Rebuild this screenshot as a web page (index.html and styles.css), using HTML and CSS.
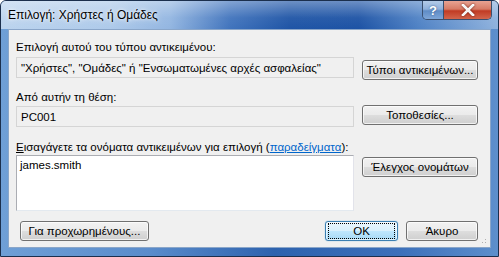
FILE: index.html
```html
<!DOCTYPE html>
<html>
<head>
<meta charset="utf-8">
<link rel="stylesheet" href="styles.css">
</head>
<body>
<div class="window">
  <div class="titlebar">
    <div class="title">Επιλογή: Χρήστες ή Ομάδες</div>
    <div class="caption-btns">
      <div class="cap help">?</div>
      <div class="cap close">
        <svg width="14" height="12" viewBox="0 0 14 12"><path d="M2 1 L12 11 M12 1 L2 11" stroke="#fff" stroke-width="2.6" stroke-linecap="square" fill="none"/><path d="M2 1 L12 11 M12 1 L2 11" stroke="#f4f4f4" stroke-width="1.6" fill="none"/></svg>
      </div>
    </div>
  </div>
  <div class="body-row">
    <div class="client">
      <div class="label l1">Επιλογή αυτού του τύπου αντικειμένου:</div>
      <div class="row r1">
        <div class="field">"Χρήστες", "Ομάδες" ή "Ενσωματωμένες αρχές ασφαλείας"</div>
        <div class="btn b1">Τύποι αντικειμένων...</div>
      </div>
      <div class="label l2">Από αυτήν τη θέση:</div>
      <div class="row r2">
        <div class="field">PC001</div>
        <div class="btn b2">Τοποθεσίες...</div>
      </div>
      <div class="label l3"><u>Ε</u>ισαγάγετε τα ονόματα αντικειμένων για επιλογή (<span class="link">παραδείγματα</span>):</div>
      <div class="row r3">
        <div class="textarea">james.smith</div>
        <div class="btn b3">Έλεγχος ονομάτων</div>
      </div>
      <div class="row bottom">
        <div class="btn adv">Για προχωρημένους...</div>
        <div class="spacer"></div>
        <div class="btn ok"><span class="focus">OK</span></div>
        <div class="btn cancel">Άκυρο</div>
      </div>
      <div class="grip"></div>
    </div>
  </div>
</div>
</body>
</html>
```
FILE: styles.css
```css
html, body { margin: 0; padding: 0; }
body {
  width: 499px;
  height: 257px;
  overflow: hidden;
  background: #fff;
  font-family: "Liberation Sans", Arial, sans-serif;
  font-size: 11.5px;
  color: #000;
}
.window {
  width: 499px;
  height: 257px;
  box-sizing: border-box;
  border: 1px solid #1b2f4d;
  border-radius: 6px 6px 0 0;
  background: linear-gradient(90deg, #6f9fd6 0%, #5a8ccb 30%, #2d62ae 55%, #3c70ba 80%, #5d8fcc 100%);
  display: flex;
  flex-direction: column;
  overflow: hidden;
}
.titlebar {
  height: 28px;
  display: flex;
  align-items: flex-start;
  background:
    linear-gradient(180deg, rgba(255,255,255,0.35) 0%, rgba(255,255,255,0.05) 60%, rgba(0,0,0,0) 100%),
    linear-gradient(90deg, #bcd4ee 0%, #aecaea 22%, #93b6e1 34%, #4174bd 46%, #1f55a6 58%, #1d53a5 72%, #4f82c5 84%, #8fb2dd 100%);
}
.title {
  padding: 7px 0 0 7px;
  font-family: "Liberation Sans", Arial, sans-serif;
  font-size: 12px;
  color: #000;
  text-shadow: 0 0 6px rgba(255,255,255,0.9), 0 0 3px rgba(255,255,255,0.9);
  flex: 1;
}
.caption-btns {
  display: flex;
  margin-right: 6px;
  border: 1px solid #3a4f6e;
  border-top: none;
  border-radius: 0 0 5px 5px;
  overflow: hidden;
}
.cap {
  height: 18px;
  display: flex;
  align-items: center;
  justify-content: center;
}
.help {
  width: 20px;
  border-right: 1px solid #3a4f6e;
  background: linear-gradient(180deg, #b3cbe8 0%, #8fb0db 45%, #5f8cc6 55%, #7ea6d8 100%);
  color: #fff;
  font-weight: bold;
  font-size: 13px;
  text-shadow: 0 0 2px #2a4f80;
}
.close {
  width: 47px;
  background: linear-gradient(180deg, #e8a393 0%, #d67b66 45%, #c13b24 55%, #d2654c 100%);
}
.close svg { filter: drop-shadow(0 0 1px #6b1a0c); }
.body-row {
  flex: 1;
  display: flex;
  padding: 0 7px 8px 7px;
}
.client {
  flex: 1;
  position: relative;
  background: #f0f0f0;
  border: 1px solid #8aa6c9;
  box-sizing: border-box;
  padding: 10px 12px 0 7px;
}
.label {
  line-height: 15px;
  height: 15px;
  white-space: nowrap;
}
.l1 { margin-bottom: 2px; }
.l2 { margin-top: 10px; margin-bottom: 1px; }
.l3 { margin-top: 13px; }
.link { color: #0066cc; text-decoration: underline; }
.row { display: flex; align-items: flex-start; }
.field {
  width: 338px;
  height: 21px;
  box-sizing: border-box;
  border: 1px solid #d5d5d5;
  background: #f0f0f0;
  padding: 3px 0 0 4px;
  line-height: 14px;
  white-space: nowrap;
  overflow: hidden;
}
.textarea {
  width: 338px;
  height: 56px;
  box-sizing: border-box;
  border: 1px solid #abadb3;
  border-color: #abadb3 #e2e3ea #e3e9ef #abadb3;
  background: #fff;
  padding: 2px 0 0 3px;
  line-height: 14px;
}
.btn {
  height: 20px;
  box-sizing: border-box;
  border: 1px solid #707070;
  border-radius: 3px;
  background: linear-gradient(180deg, #f2f2f2 0%, #ebebeb 48%, #dddddd 52%, #cfcfcf 100%);
  box-shadow: inset 0 0 0 1px rgba(255,255,255,0.7);
  display: flex;
  align-items: center;
  justify-content: center;
  white-space: nowrap;
  line-height: 14px;
}
.b1, .b2, .b3 { width: 116px; margin-left: 8px; }
.b1 { margin-top: 3px; }
.b2 { margin-top: -1px; }
.b3 { margin-top: 2px; }
.bottom { margin-top: 10px; }
.adv { width: 129px; margin-left: 4px; }
.spacer { flex: 1; }
.ok {
  width: 73px;
  border-color: #3c7fb1;
  background: linear-gradient(180deg, #eaf6fd 0%, #d9f0fc 48%, #bee6fd 52%, #a7d9f5 100%);
  box-shadow: inset 0 0 0 1px rgba(255,255,255,0.6), 0 0 1px #48a0d8;
}
.focus {
  display: flex;
  align-items: center;
  justify-content: center;
  width: 65px;
  height: 14px;
  border: 1px dotted #000;
}
.cancel { width: 72px; margin-left: 8px; }
.grip {
  position: absolute;
  right: 2px;
  bottom: 2px;
  width: 10px;
  height: 10px;
  background: radial-gradient(circle, #b0b0b0 0.8px, transparent 1px) 0 0 / 3px 3px;
  clip-path: polygon(100% 0, 100% 100%, 0 100%);
}
```
